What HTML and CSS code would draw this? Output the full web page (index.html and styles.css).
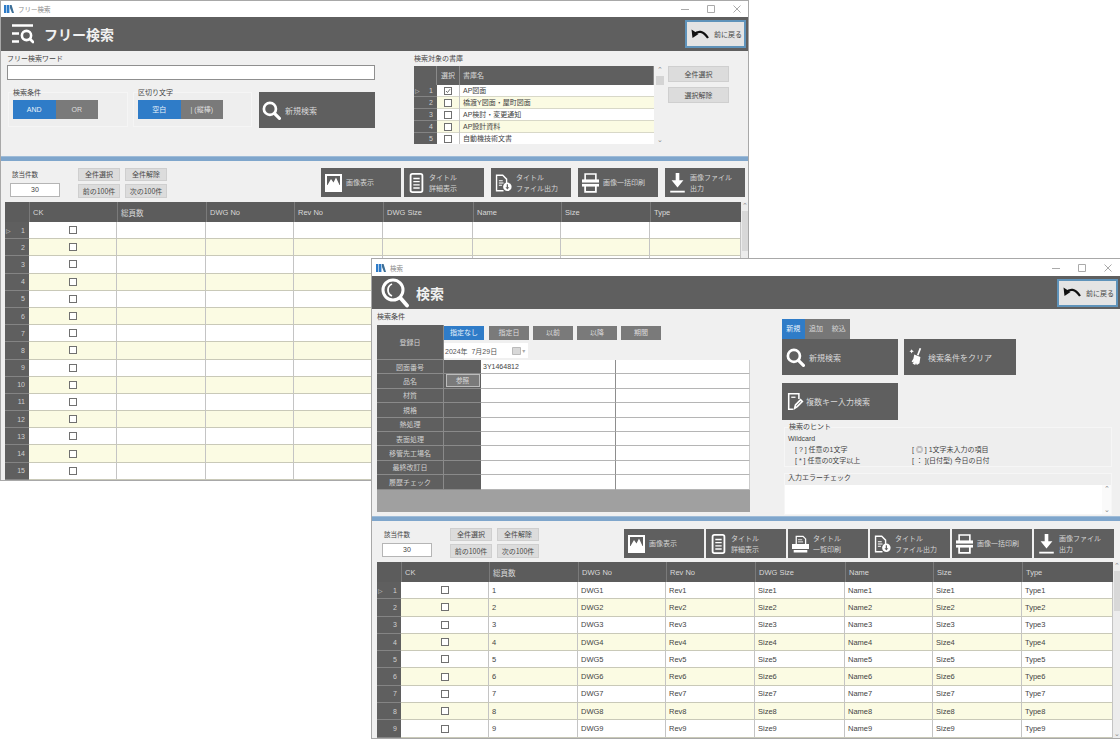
FILE: index.html
```html
<!DOCTYPE html>
<html lang="ja">
<head>
<meta charset="utf-8">
<title>検索</title>
<link rel="stylesheet" href="styles.css">
</head>
<body>
<svg class="defs" xmlns="http://www.w3.org/2000/svg">
  <symbol id="i-app" viewBox="0 0 10 8"><path fill="#2f7cc8" d="M0 0h2.4v8H0zM3 0h2.4v8H3z"/><path fill="#3d6f96" d="M6 0h1.6L10 8H8L6 3z"/></symbol>
  <symbol id="i-min" viewBox="0 0 10 10"><path stroke="#aaa" fill="none" d="M1 5.500h8"/></symbol>
  <symbol id="i-max" viewBox="0 0 10 10"><path stroke="#aaa" fill="none" d="M1.500 1.500h7v7h-7z"/></symbol>
  <symbol id="i-close" viewBox="0 0 10 10"><path stroke="#aaa" fill="none" d="M1.500 1.500l7 7M8.500 1.500l-7 7"/></symbol>
  <symbol id="i-free" viewBox="0 0 22 20"><path fill="none" stroke="#fff" stroke-width="2.400" d="M0 1.500h21M0 9.500h7M0 17.500h7"/><circle cx="14.500" cy="11.500" r="4.600" fill="none" stroke="#fff" stroke-width="2.600"/><path stroke="#fff" stroke-width="2.800" stroke-linecap="round" d="M18 15l3 3"/></symbol>
  <symbol id="i-find" viewBox="0 0 24 24"><circle cx="10" cy="10" r="7.600" fill="none" stroke="#fff" stroke-width="3.400"/><path stroke="#fff" stroke-width="4" stroke-linecap="round" d="M16 16l6 6"/></symbol>
  <symbol id="i-find-big" viewBox="0 0 28 30"><circle cx="12" cy="12" r="10" fill="none" stroke="#fff" stroke-width="3"/><path fill="none" stroke="#fff" stroke-width="1.800" d="M11 6a6.500 6.500 0 0 0 0 12"/><path stroke="#fff" stroke-width="3.800" stroke-linecap="round" d="M19.500 20l6.500 7.500"/></symbol>
  <symbol id="i-back" viewBox="0 0 20 13"><path fill="none" stroke="#111" stroke-width="2.200" d="M4 6.500C8 2.500 13 2.500 18 10"/><path fill="#111" d="M1.500 1.500l1 8.500 6-4z"/></symbol>
  <symbol id="i-image" viewBox="0 0 17 18"><path fill="#fff" d="M0 0h17v18H0z"/><path fill="#5f5f5f" d="M2 2h13v9H2z"/><path fill="#fff" d="M2.500 11l3.500-6 2.500 3.500L11 3.500l3.500 7.500z"/></symbol>
  <symbol id="i-doc" viewBox="0 0 15 22"><rect x="1" y="1" width="13" height="20" rx="2" fill="none" stroke="#fff" stroke-width="2"/><path stroke="#fff" stroke-width="1.500" d="M4 6h7M4 9.500h7M4 13h7M4 16.500h7"/></symbol>
  <symbol id="i-docdl" viewBox="0 0 22 22"><path fill="none" stroke="#fff" stroke-width="1.800" d="M11 21H2V1h8l5 5v6"/><path stroke="#fff" stroke-width="1.300" d="M5 8h5M5 11h6M5 14h4"/><circle cx="16" cy="16" r="5.500" fill="#fff"/><path stroke="#5f5f5f" stroke-width="1.600" d="M16 12.500v5"/><path fill="#5f5f5f" d="M13.500 16.500h5L16 19.500z"/></symbol>
  <symbol id="i-print" viewBox="0 0 19 22"><path fill="none" stroke="#fff" stroke-width="1.800" d="M3.500 8V1h12v7"/><path fill="#fff" d="M0 7h19v8H0z"/><path fill="#5f5f5f" d="M0 10.500h19v1.500H0z"/><path fill="none" stroke="#fff" stroke-width="2" d="M3.500 14v7h12v-7"/></symbol>
  <symbol id="i-printlist" viewBox="0 0 20 20"><path fill="none" stroke="#fff" stroke-width="1.500" d="M5 10V1h8l3 3v6"/><path stroke="#fff" d="M7 5h5M7 7.500h6"/><path fill="#fff" d="M0 10h20v6H0zM2 17h16v3H2z"/></symbol>
  <symbol id="i-dl" viewBox="0 0 18 22"><path fill="#fff" d="M7 0h4v8h4.500L9 16 2.500 8H7z"/><path fill="#fff" d="M1 19.500h16v2H1z"/></symbol>
  <symbol id="i-broom" viewBox="0 0 16 20"><path stroke="#fff" stroke-width="2" d="M13 0l-3 8"/><path fill="#fff" d="M6 7l7 3-1 7-3 2-1-2-1 2-2-1-1-1 2-2-2 1-1-1 2-3z"/><path fill="#fff" d="M3 1l.8 1.700L5.500 3.500 3.800 4.300 3 6l-.8-1.700L.5 3.500l1.700-.8z"/></symbol>
  <symbol id="i-edit" viewBox="0 0 18 20"><path fill="none" stroke="#fff" stroke-width="1.800" d="M6 19H1V1h12v6"/><path stroke="#fff" stroke-width="1.500" d="M4 5h5"/><path fill="none" stroke="#fff" stroke-width="2" d="M8 18l1-4 6-6 2 2-6 6z"/></symbol>
  <symbol id="i-check" viewBox="0 0 8 8"><path fill="none" stroke="#444" stroke-width="1" d="M1.300 4l2 2 3.500-4.500"/></symbol>
  <symbol id="i-cal" viewBox="0 0 9 9"><path fill="#d8d8d8" stroke="#bbb" d="M.5 1.500h8v7h-8z"/></symbol>
</svg>

<!-- フリー検索 window -->
<section class="win win-free">
  <div class="titlebar titlebar-free">
    <svg class="app-ico"><use href="#i-app"/></svg><span class="win-title">フリー検索</span>
    <div class="ctrls"><svg><use href="#i-min"/></svg><svg><use href="#i-max"/></svg><svg><use href="#i-close"/></svg></div>
  </div>
  <header class="appbar appbar-free">
    <svg class="ico-free"><use href="#i-free"/></svg>
    <h1 class="apptitle">フリー検索</h1>
    <button class="back"><svg class="ico-back"><use href="#i-back"/></svg>前に戻る</button>
  </header>
  <div class="free-form">
    <div class="free-left">
      <div class="lbl">フリー検索ワード</div>
      <div class="wordbox"></div>
      <div class="free-opts">
        <div class="optgroup">
          <div class="optlabel">検索条件</div>
          <div class="seg"><span class="seg-on">AND</span><span class="seg-off">OR</span></div>
        </div>
        <div class="optgroup optgroup-2">
          <div class="optlabel">区切り文字</div>
          <div class="seg seg-low"><span class="seg-on">空白</span><span class="seg-off">| (縦棒)</span></div>
        </div>
        <button class="bigbtn bigbtn-free"><svg class="ico-find"><use href="#i-find"/></svg>新規検索</button>
      </div>
    </div>
    <div class="lib">
      <div class="lbl">検索対象の書庫</div>
      <div class="lib-body">
        <div class="libtable">
          <div class="librow libhead"><span></span><span>選択</span><span>書庫名</span></div>
          <div class="librow"><span class="rh"><i class="cur">▷</i>1</span><span class="cc"><b class="cb"><svg><use href="#i-check"/></svg></b></span><span>AP図面</span></div>
          <div class="librow alt"><span class="rh">2</span><span class="cc"><b class="cb"></b></span><span>橋渡Y図面・屋町図面</span></div>
          <div class="librow"><span class="rh">3</span><span class="cc"><b class="cb"></b></span><span>AP検討・変更通知</span></div>
          <div class="librow alt"><span class="rh">4</span><span class="cc"><b class="cb"></b></span><span>AP設計資料</span></div>
          <div class="librow"><span class="rh">5</span><span class="cc"><b class="cb"></b></span><span>自動機技術文書</span></div>
        </div>
        <div class="libscroll"><span class="arrow">⌃</span><span class="libthumb"></span><span class="arrow arrow-end">⌄</span></div>
        <div class="libbtns"><button class="sbtn sbtn-lib">全件選択</button><button class="sbtn sbtn-lib">選択解除</button></div>
      </div>
    </div>
  </div>
  <div class="bluebar"></div>
  <div class="resultbar resultbar-free">
    <div class="count"><div class="count-lbl">該当件数</div><div class="count-val">30</div></div>
    <div class="pager">
      <button class="sbtn">全件選択</button><button class="sbtn">全件解除</button>
      <button class="sbtn">前の100件</button><button class="sbtn">次の100件</button>
    </div>
    <div class="tools tools-free">
      <button class="tool tight"><svg class="ico-tool"><use href="#i-image"/></svg><span>画像表示</span></button>
      <button class="tool"><svg class="ico-tool"><use href="#i-doc"/></svg><span>タイトル<br>詳細表示</span></button>
      <button class="tool"><svg class="ico-tool"><use href="#i-docdl"/></svg><span>タイトル<br>ファイル出力</span></button>
      <button class="tool"><svg class="ico-tool"><use href="#i-print"/></svg><span>画像一括印刷</span></button>
      <button class="tool"><svg class="ico-tool"><use href="#i-dl"/></svg><span>画像ファイル<br>出力</span></button>
    </div>
  </div>
  <div class="gridwrap gridwrap-free">
    <div class="grid">
      <div class="row head"><span></span><span>CK</span><span>総頁数</span><span>DWG No</span><span>Rev No</span><span>DWG Size</span><span>Name</span><span>Size</span><span>Type</span></div>
      <div class="row row-f"><span class="rh"><i class="cur">▷</i>1</span><span class="cc"><b class="cb"></b></span><span></span><span></span><span></span><span></span><span></span><span></span><span></span></div>
      <div class="row row-f alt"><span class="rh">2</span><span class="cc"><b class="cb"></b></span><span></span><span></span><span></span><span></span><span></span><span></span><span></span></div>
      <div class="row row-f"><span class="rh">3</span><span class="cc"><b class="cb"></b></span><span></span><span></span><span></span><span></span><span></span><span></span><span></span></div>
      <div class="row row-f alt"><span class="rh">4</span><span class="cc"><b class="cb"></b></span><span></span><span></span><span></span><span></span><span></span><span></span><span></span></div>
      <div class="row row-f"><span class="rh">5</span><span class="cc"><b class="cb"></b></span><span></span><span></span><span></span><span></span><span></span><span></span><span></span></div>
      <div class="row row-f alt"><span class="rh">6</span><span class="cc"><b class="cb"></b></span><span></span><span></span><span></span><span></span><span></span><span></span><span></span></div>
      <div class="row row-f"><span class="rh">7</span><span class="cc"><b class="cb"></b></span><span></span><span></span><span></span><span></span><span></span><span></span><span></span></div>
      <div class="row row-f alt"><span class="rh">8</span><span class="cc"><b class="cb"></b></span><span></span><span></span><span></span><span></span><span></span><span></span><span></span></div>
      <div class="row row-f"><span class="rh">9</span><span class="cc"><b class="cb"></b></span><span></span><span></span><span></span><span></span><span></span><span></span><span></span></div>
      <div class="row row-f alt"><span class="rh">10</span><span class="cc"><b class="cb"></b></span><span></span><span></span><span></span><span></span><span></span><span></span><span></span></div>
      <div class="row row-f"><span class="rh">11</span><span class="cc"><b class="cb"></b></span><span></span><span></span><span></span><span></span><span></span><span></span><span></span></div>
      <div class="row row-f alt"><span class="rh">12</span><span class="cc"><b class="cb"></b></span><span></span><span></span><span></span><span></span><span></span><span></span><span></span></div>
      <div class="row row-f"><span class="rh">13</span><span class="cc"><b class="cb"></b></span><span></span><span></span><span></span><span></span><span></span><span></span><span></span></div>
      <div class="row row-f alt"><span class="rh">14</span><span class="cc"><b class="cb"></b></span><span></span><span></span><span></span><span></span><span></span><span></span><span></span></div>
      <div class="row row-f"><span class="rh">15</span><span class="cc"><b class="cb"></b></span><span></span><span></span><span></span><span></span><span></span><span></span><span></span></div>
    </div>
    <div class="vscroll"><span class="arrow">⌃</span><span class="vthumb"></span></div>
  </div>
</section>

<!-- 検索 window -->
<section class="win win-search">
  <div class="titlebar">
    <svg class="app-ico"><use href="#i-app"/></svg><span class="win-title">検索</span>
    <div class="ctrls ctrls-search"><svg><use href="#i-min"/></svg><svg><use href="#i-max"/></svg><svg><use href="#i-close"/></svg></div>
  </div>
  <header class="appbar appbar-search">
    <svg class="ico-findbig"><use href="#i-find-big"/></svg>
    <h1 class="apptitle">検索</h1>
    <button class="back back-search"><svg class="ico-back"><use href="#i-back"/></svg>前に戻る</button>
  </header>
  <div class="search-main">
    <div class="search-left">
      <div class="lbl lbl-cond">検索条件</div>
      <div class="cond">
        <div class="date-row">
          <div class="fl fl-date">登録日</div>
          <div class="date-side">
            <div class="date-btns">
              <span class="dbtn dbtn-on">指定なし</span><span class="dbtn">指定日</span><span class="dbtn">以前</span><span class="dbtn">以降</span><span class="dbtn">期間</span>
            </div>
            <div class="datebox">2024年&nbsp; 7月29日<svg class="ico-cal"><use href="#i-cal"/></svg><span class="cal-caret">▾</span></div>
          </div>
        </div>
        <div class="frow"><span class="fl">図面番号</span><span class="fl2"></span><span class="fv">3Y1464812</span><span class="fv"></span></div>
        <div class="frow"><span class="fl">品名</span><span class="fl2"><button class="refbtn">参照</button></span><span class="fv"></span><span class="fv"></span></div>
        <div class="frow"><span class="fl">材質</span><span class="fl2"></span><span class="fv"></span><span class="fv"></span></div>
        <div class="frow"><span class="fl">規格</span><span class="fl2"></span><span class="fv"></span><span class="fv"></span></div>
        <div class="frow"><span class="fl">熱処理</span><span class="fl2"></span><span class="fv"></span><span class="fv"></span></div>
        <div class="frow"><span class="fl">表面処理</span><span class="fl2"></span><span class="fv"></span><span class="fv"></span></div>
        <div class="frow"><span class="fl">移管先工場名</span><span class="fl2"></span><span class="fv"></span><span class="fv"></span></div>
        <div class="frow"><span class="fl">最終改訂日</span><span class="fl2"></span><span class="fv"></span><span class="fv"></span></div>
        <div class="frow"><span class="fl">履歴チェック</span><span class="fl2"></span><span class="fv"></span><span class="fv"></span></div>
        <div class="cond-foot"></div>
      </div>
    </div>
    <div class="search-right">
      <div class="tabs"><span class="tab tab-on">新規</span><span class="tab">追加</span><span class="tab">絞込</span></div>
      <div class="actions">
        <button class="bigbtn act-a"><svg class="ico-find"><use href="#i-find"/></svg>新規検索</button>
        <button class="bigbtn act-b"><svg class="ico-broom"><use href="#i-broom"/></svg>検索条件をクリア</button>
      </div>
      <button class="bigbtn act-c"><svg class="ico-edit"><use href="#i-edit"/></svg>複数キー入力検索</button>
      <div class="panel panel-hint">
        <div class="panel-lbl">検索のヒント</div>
        <div class="hint-head">Wildcard</div>
        <div class="hints">
          <span>[ ? ] 任意の1文字</span><span>[ ◎ ] 1文字未入力の項目</span>
          <span>[ * ] 任意の0文字以上</span><span>[ ： ](日付型) 今日の日付</span>
        </div>
      </div>
      <div class="panel panel-err">
        <div class="panel-lbl panel-lbl-err">入力エラーチェック</div>
        <div class="errbox"><div class="errtext"></div><div class="errscroll"><span class="arrow">⌃</span><span class="arrow arrow-end">⌄</span></div></div>
      </div>
    </div>
  </div>
  <div class="bluebar"></div>
  <div class="resultbar resultbar-search">
    <div class="count"><div class="count-lbl">該当件数</div><div class="count-val">30</div></div>
    <div class="pager">
      <button class="sbtn">全件選択</button><button class="sbtn">全件解除</button>
      <button class="sbtn">前の100件</button><button class="sbtn">次の100件</button>
    </div>
    <div class="tools tools-search">
      <button class="tool"><svg class="ico-tool"><use href="#i-image"/></svg><span>画像表示</span></button>
      <button class="tool"><svg class="ico-tool"><use href="#i-doc"/></svg><span>タイトル<br>詳細表示</span></button>
      <button class="tool"><svg class="ico-tool"><use href="#i-printlist"/></svg><span>タイトル<br>一覧印刷</span></button>
      <button class="tool"><svg class="ico-tool"><use href="#i-docdl"/></svg><span>タイトル<br>ファイル出力</span></button>
      <button class="tool"><svg class="ico-tool"><use href="#i-print"/></svg><span>画像一括印刷</span></button>
      <button class="tool"><svg class="ico-tool"><use href="#i-dl"/></svg><span>画像ファイル<br>出力</span></button>
    </div>
  </div>
  <div class="gridwrap gridwrap-search">
    <div class="grid">
      <div class="row head"><span></span><span>CK</span><span>総頁数</span><span>DWG No</span><span>Rev No</span><span>DWG Size</span><span>Name</span><span>Size</span><span>Type</span></div>
      <div class="row row-s"><span class="rh"><i class="cur">▷</i>1</span><span class="cc"><b class="cb"></b></span><span>1</span><span>DWG1</span><span>Rev1</span><span>Size1</span><span>Name1</span><span>Size1</span><span>Type1</span></div>
      <div class="row row-s alt"><span class="rh">2</span><span class="cc"><b class="cb"></b></span><span>2</span><span>DWG2</span><span>Rev2</span><span>Size2</span><span>Name2</span><span>Size2</span><span>Type2</span></div>
      <div class="row row-s"><span class="rh">3</span><span class="cc"><b class="cb"></b></span><span>3</span><span>DWG3</span><span>Rev3</span><span>Size3</span><span>Name3</span><span>Size3</span><span>Type3</span></div>
      <div class="row row-s alt"><span class="rh">4</span><span class="cc"><b class="cb"></b></span><span>4</span><span>DWG4</span><span>Rev4</span><span>Size4</span><span>Name4</span><span>Size4</span><span>Type4</span></div>
      <div class="row row-s"><span class="rh">5</span><span class="cc"><b class="cb"></b></span><span>5</span><span>DWG5</span><span>Rev5</span><span>Size5</span><span>Name5</span><span>Size5</span><span>Type5</span></div>
      <div class="row row-s alt"><span class="rh">6</span><span class="cc"><b class="cb"></b></span><span>6</span><span>DWG6</span><span>Rev6</span><span>Size6</span><span>Name6</span><span>Size6</span><span>Type6</span></div>
      <div class="row row-s"><span class="rh">7</span><span class="cc"><b class="cb"></b></span><span>7</span><span>DWG7</span><span>Rev7</span><span>Size7</span><span>Name7</span><span>Size7</span><span>Type7</span></div>
      <div class="row row-s alt"><span class="rh">8</span><span class="cc"><b class="cb"></b></span><span>8</span><span>DWG8</span><span>Rev8</span><span>Size8</span><span>Name8</span><span>Size8</span><span>Type8</span></div>
      <div class="row row-s"><span class="rh">9</span><span class="cc"><b class="cb"></b></span><span>9</span><span>DWG9</span><span>Rev9</span><span>Size9</span><span>Name9</span><span>Size9</span><span>Type9</span></div>
    </div>
    <div class="vscroll"><span class="arrow">⌃</span><span class="vthumb"></span><span class="arrow arrow-end">⌄</span></div>
  </div>
</section>
</body>
</html>
```

FILE: styles.css
```css
* { box-sizing: border-box; }
html, body { margin: 0; height: 100%; }
body {
  background: #fff;
  overflow: hidden;
  position: relative;
  font-family: "Liberation Sans", "Noto Sans CJK JP", sans-serif;
  font-size: 7px;
  color: #444;
}
button { font: inherit; padding: 0; border: 0; cursor: default; }
.defs { display: none; }

/* Windows sit on a free desktop */
.win {
  position: absolute;
  background: #f0f0f0;
  border: 1px solid #a8a8a8;
  display: flex;
  flex-direction: column;
  overflow: hidden;
}
.win-free { left: 0; top: 0; width: 749px; height: 481px; }
.win-search { left: 371px; top: 258px; width: 749px; height: 481px; border-right: 0; }

.titlebar { height: 17px; flex: none; background: #fff; display: flex; align-items: center; padding-left: 4px; }
.titlebar-free { height: 16px; padding-left: 3px; }
.app-ico { width: 10px; height: 8px; margin-right: 4px; }
.win-title { font-size: 6.500px; color: #8a8a8a; }
.ctrls { margin-left: auto; display: flex; gap: 16px; padding-right: 6px; }
.ctrls svg { width: 10px; height: 10px; }
.ctrls-search { padding-right: 7px; }

.appbar { flex: none; background: #5f5f5f; display: flex; align-items: center; color: #fff; }
.appbar-free { height: 34px; padding-left: 11px; padding-right: 2px; }
.appbar-search { height: 33px; padding-left: 9px; padding-right: 2px; }
.ico-free { width: 22px; height: 20px; margin-right: 10px; }
.ico-findbig { width: 28px; height: 30px; margin-right: 7px; }
.apptitle { margin: 0; font-size: 14px; font-weight: 700; font-family: "Noto Sans CJK JP", sans-serif; color: #f0f0f0; }
.back {
  margin-left: auto;
  width: 61px;
  height: 28px;
  background: #e4e4e4;
  border: 2px solid #5f93ba;
  color: #444;
  display: flex;
  align-items: center;
  gap: 4px;
  padding-left: 3px;
  font-size: 7px;
  white-space: nowrap;
}
.ico-back { width: 20px; height: 13px; flex: none; }

.lbl { font-size: 7px; line-height: 11px; height: 11px; color: #444; }

/* free form */
.free-form { height: 105px; flex: none; display: flex; padding: 2px 0 0 6px; }
.free-left { width: 368px; flex: none; }
.wordbox { height: 15px; margin-top: 1px; background: #fff; border: 1px solid #8f8f8f; }
.free-opts { display: flex; margin-top: 12px; }
.optgroup { width: 120px; height: 35px; margin-left: 1px; background: #eeeeee; border: 1px solid #f5f5f5; padding: 3px 0 0 4px; }
.optgroup-2 { width: 119px; margin-left: 5px; }
.optlabel { height: 10px; line-height: 10px; margin-top: -8px; margin-bottom: 2px; font-size: 7px; color: #444; }
.seg { display: flex; width: 85px; height: 19px; color: #dfdfdf; line-height: 19px; text-align: center; font-size: 7px; }
.seg-low { margin-top: 1px; }
.seg span { flex: 1; white-space: nowrap; }
.seg-on { background: #2f7cc8; color: #e8f2fb; }
.seg-off { background: #7a7a7a; }
.bigbtn {
  background: #5f5f5f;
  color: #d8d8d8;
  display: flex;
  align-items: center;
  font-size: 8px;
  white-space: nowrap;
  font-family: "Noto Sans CJK JP", sans-serif;
}
.bigbtn-free { width: 116px; height: 36px; margin-left: 7px; padding-left: 3px; gap: 4px; }
.ico-find { width: 19px; height: 19px; flex: none; }

.lib { margin-left: 39px; }
.lib-body { display: flex; margin-top: 2px; }
.libtable { width: 240px; height: 78px; overflow: hidden; background: #fff; }
.librow { display: grid; grid-template-columns: 23px 23px 194px; height: 12px; line-height: 11px; border-bottom: 1px solid #d8d8c8; background: #fff; }
.librow.alt { background: #fbfbe3; }
.librow span:nth-child(3) { padding-left: 3px; }
.libhead { height: 19px; line-height: 19px; background: #5f5f5f; color: #d8d8d8; border: 0; }
.libhead span { border-right: 1px solid #8a8a8a; text-align: left; }
.libhead span:nth-child(2) { text-align: center; }
.libscroll { width: 9px; height: 78px; margin-left: 1px; display: flex; flex-direction: column; align-items: center; }
.libthumb { width: 8px; height: 9px; margin-top: 2px; background: #d4d4d4; }
.arrow { height: 8px; line-height: 8px; font-size: 7px; color: #888; flex: none; }
.arrow-end { margin-top: auto; }
.libbtns { margin-left: 4px; display: flex; flex-direction: column; gap: 5px; }
.sbtn { background: #dcdcdc; border: 1px solid #cfcfcf; color: #4a4a4a; font-size: 7px; font-family: "Noto Sans CJK JP", sans-serif; white-space: nowrap; line-height: 1; }
.sbtn-lib { width: 61px; height: 16px; }

.bluebar { height: 5px; flex: none; background: #7fa6cc; border-top: 1px solid #9fbcd8; }

/* result toolbar */
.resultbar { flex: none; height: 41px; display: flex; }
.resultbar-free { padding: 7px 3px 0 9px; }
.resultbar-search { padding: 7px 6px 0 10px; }
.count { width: 50px; flex: none; }
.count-lbl { height: 10px; line-height: 10px; margin: 2px 0 3px 2px; font-size: 6.500px; color: #444; }
.count-val { height: 14px; background: #fff; border: 1px solid #b5b5b5; text-align: center; line-height: 12px; font-size: 7px; color: #444; }
.pager { margin-left: 18px; display: grid; grid-template-columns: 42px 42px; grid-template-rows: 13px 14px; gap: 3px 5px; }
.tools { margin-left: auto; display: flex; height: 29px; }
.tools-free { gap: 7px; }
.tools-search { gap: 2px; margin-top: 1px; }
.tool {
  width: 80px;
  height: 29px;
  background: #5f5f5f;
  color: #d4d4d4;
  display: flex;
  align-items: center;
  padding-left: 4px;
  gap: 4px;
  font-size: 7px;
  line-height: 11px;
  text-align: left;
  white-space: nowrap;
  font-family: "Noto Sans CJK JP", sans-serif;
}
.tight { margin-right: -4px; }
.ico-tool { width: 17px; height: 20px; flex: none; }

/* data grid */
.gridwrap { display: flex; flex: 1; min-height: 0; overflow: hidden; }
.gridwrap-free { padding-left: 4px; }
.gridwrap-search { padding-left: 5px; }
.grid { width: 736px; flex: none; }
.row { display: grid; grid-template-columns: 24px 88px 89px 88px 89px 90px 88px 89px 91px; background: #fff; font-size: 7.500px; }
.row span { border-right: 1px solid #c4c4c4; border-bottom: 1px solid #c9c9b8; padding-left: 3px; display: flex; align-items: center; color: #444; }
.row-f { height: 17.200px; }
.row-s { height: 17.300px; }
.row.alt { background: #fbfbe3; }
.row.head { height: 20px; background: #5c5c5c; }
.row.head span { color: #d8d8d8; border: 0; border-left: 1px solid #7a7a7a; }
.row.head span:first-child { border: 0; }
.row .rh, .librow .rh {
  background: #5f5f5f;
  color: #cfcfcf;
  border: 0;
  border-bottom: 1px solid #848484;
  display: flex;
  align-items: center;
  justify-content: flex-end;
  padding: 0 4px 0 1px;
  font-size: 7px;
}
.cur { font-style: normal; margin-right: auto; color: #d0d0d0; font-size: 6px; font-family: "DejaVu Sans", sans-serif; }
.row .cc, .librow .cc { justify-content: center; padding: 0; display: flex; align-items: center; border-right: 1px solid #c4c4c4; }
.cb { display: block; width: 8px; height: 8px; border: 1px solid #707070; background: #fff; }
.cb svg { display: block; width: 6px; height: 6px; }
.vscroll { width: 7px; flex: none; background: #ececec; display: flex; flex-direction: column; align-items: center; }
.vthumb { width: 6px; height: 40px; background: #d8d8d8; margin-top: 1px; }

/* search form */
.search-main { height: 207px; flex: none; display: flex; padding-left: 5px; }
.search-left { width: 373px; flex: none; }
.lbl-cond { height: 10px; line-height: 10px; margin: 3px 0; color: #444; }
.cond { height: 187px; display: flex; flex-direction: column; }
.date-row { height: 35px; flex: none; display: flex; }
.fl { background: #5f5f5f; color: #d0d0d0; display: flex; align-items: center; justify-content: center; border-bottom: 1px solid #8a8a8a; border-right: 1px solid #8a8a8a; }
.fl-date { width: 67px; }
.date-side { flex: 1; padding-top: 1px; }
.date-btns { display: flex; }
.dbtn { width: 40px; height: 14px; margin-right: 4px; background: #7a7a7a; color: #dcdcdc; text-align: center; line-height: 14px; }
.dbtn-on { background: #2f7cc8; color: #e8f2fb; margin-right: 5px; }
.datebox { width: 84px; height: 15px; margin-top: 3px; background: #fff; display: flex; align-items: center; padding-left: 1px; color: #555; white-space: nowrap; }
.ico-cal { width: 9px; height: 9px; margin-left: 15px; }
.cal-caret { color: #aaa; font-size: 6px; margin-left: 1px; font-family: "DejaVu Sans", sans-serif; }
.frow { display: grid; grid-template-columns: 67px 37px 135px 134px; height: 14.400px; flex: none; }
.fl2 { background: #5f5f5f; border-bottom: 1px solid #8a8a8a; display: flex; justify-content: center; }
.fv { background: #fff; border-bottom: 1px solid #b5b5b5; border-right: 1px solid #8e8e8e; padding-left: 2px; font-size: 7px; line-height: 13px; color: #444; }
.frow .fv:last-child { border-right: 1px solid #ccc; }
.refbtn { width: 34px; height: 13px; background: #7a7a7a; border: 1px solid #bcbcbc; color: #ddd; font-size: 6.500px; line-height: 1; }
.cond-foot { flex: 1; background: #a0a0a0; }

.search-right { width: 330px; margin-left: 32px; padding-top: 10px; flex: none; }
.tabs { display: flex; height: 20px; width: 68px; background: #777; }
.tab { flex: 1; color: #d8d8d8; text-align: center; line-height: 20px; font-size: 7px; }
.tab-on { background: #2f7cc8; color: #e8f2fb; }
.actions { display: flex; gap: 6px; height: 36px; }
.act-a { width: 116px; padding-left: 4px; gap: 4px; height: 36px; }
.act-b { width: 112px; padding-left: 5px; gap: 5px; height: 36px; }
.act-c { width: 116px; height: 37px; margin-top: 8px; padding-left: 5px; gap: 2px; }
.ico-broom { width: 14px; height: 18px; flex: none; }
.ico-edit { width: 17px; height: 17px; flex: none; }
.panel { margin-left: 2px; width: 328px; border: 1px solid #f6f6f6; background: #eeeeee; }
.panel-hint { margin-top: 7px; height: 40px; padding-left: 3px; }
.panel-err { margin-top: 6px; height: 42px; }
.panel-lbl { height: 10px; line-height: 10px; margin-top: -6px; margin-bottom: 1px; font-size: 7px; color: #444; padding-left: 1px; }
.panel-lbl-err { margin-top: -1px; margin-bottom: 2px; padding-left: 3px; }
.hint-head { height: 11px; line-height: 11px; font-size: 7px; color: #444; }
.hints { display: grid; grid-template-columns: 117px 1fr; padding-left: 7px; line-height: 11px; font-size: 7px; color: #444; }
.errbox { display: flex; height: 29px; }
.errtext { width: 319px; background: #fff; }
.errscroll { width: 9px; display: flex; flex-direction: column; align-items: center; background: #fafafa; }
```
